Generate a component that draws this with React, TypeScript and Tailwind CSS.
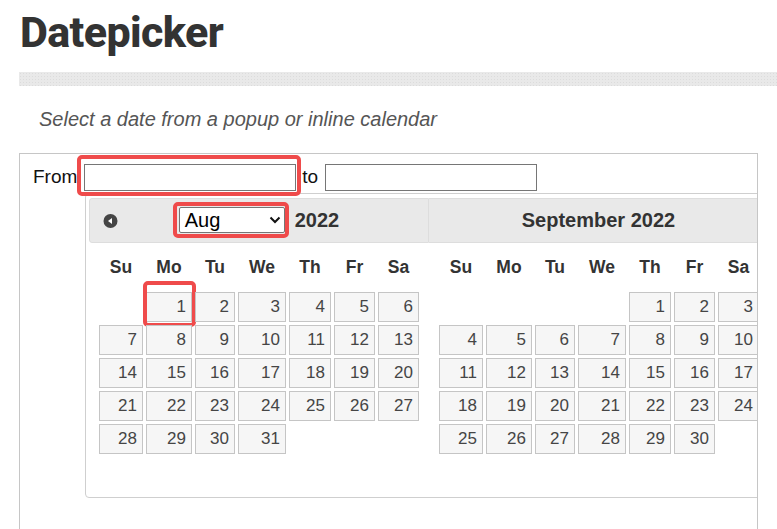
const colWidths = "grid-cols-[44px_46px_40px_48px_42px_41px_41px]"
const dayNames = ["Su", "Mo", "Tu", "We", "Th", "Fr", "Sa"]

const months = [
  { name: "Aug", offset: 1, days: 31 },
  { name: "September", offset: 4, days: 30 },
]

const PrevIcon = () => (
  <svg width="15" height="14" viewBox="0 0 15 14">
    <circle cx="7.5" cy="7" r="7" fill="#454545" />
    <polygon points="5,7 9,4 9,10" fill="#fff" />
  </svg>
)

const Chevron = () => (
  <svg width="12" height="8" viewBox="0 0 12 8">
    <path d="M1.5 1.5 L6 6 L10.5 1.5" fill="none" stroke="#111" strokeWidth="2" />
  </svg>
)

const Month = ({ month, first }: { month: (typeof months)[number]; first: boolean }) => {
  const cells: (number | null)[] = []
  for (let i = 0; i < month.offset; i++) cells.push(null)
  for (let d = 1; d <= month.days; d++) cells.push(d)

  return (
    <div className="w-[340px] shrink-0">
      <div
        className={
          "relative flex h-[45px] items-center justify-center border border-[#dddddd] bg-[#e9e9e9] text-[20px] font-bold text-[#333] " +
          (first ? "rounded-l-[3px]" : "border-l-0 rounded-r-[3px]")
        }
      >
        {first ? (
          <>
            <span className="absolute left-[13px] top-[15px] flex">
              <PrevIcon />
            </span>
            <span className="relative">
              <div className="flex h-[26px] w-[106px] items-center justify-between rounded-[2px] border border-[#767676] bg-white pl-[5px] pr-[3px] text-[20px] font-normal text-black">
                <span>Aug</span>
                <Chevron />
              </div>
              <span className="absolute left-[-6px] top-[-5px] h-[36px] w-[116px] rounded-[5px] border-4 border-[#ef4b4b]" />
            </span>
            <span className="ml-[10px]">2022</span>
          </>
        ) : (
          <span>September 2022</span>
        )}
      </div>
      <div className="pl-[10px]">
        <div className={`grid h-[49px] items-center gap-x-[3px] ${colWidths}`}>
          {dayNames.map((d) => (
            <div key={d} className="text-center text-[17.5px] font-bold text-[#333]">
              {d}
            </div>
          ))}
        </div>
        <div className={`grid gap-[3px] ${colWidths}`}>
          {cells.map((d, i) =>
            d === null ? (
              <div key={"e" + i} />
            ) : (
              <div key={d} className="relative">
                <div className="flex h-[30px] items-center justify-end border border-[#c5c5c5] bg-[#f6f6f6] pr-[5px] text-[17px] text-[#454545]">
                  {d}
                </div>
                {first && d === 1 && (
                  <span className="absolute left-[-3px] top-[-11px] h-[46px] w-[53px] rounded-[5px] border-4 border-[#ef4b4b]" />
                )}
              </div>
            )
          )}
        </div>
      </div>
    </div>
  )
}

export default function App() {
  return (
    <div className="h-[529px] w-[777px] overflow-hidden bg-white pt-[11px] font-['Liberation_Sans',Arial,sans-serif]">
      <h1 className="ml-[20px] font-['Roboto',sans-serif] text-[43px] font-extrabold leading-none tracking-[-0.6px] text-[#333]">
        Datepicker
      </h1>
      <div className="ml-[19px] mt-[18px] h-[14px] bg-[#e9e9e9] bg-[image:radial-gradient(#dcdcdc_0.8px,transparent_0.9px)] bg-[length:3px_3px]" />
      <p className="ml-[39px] mt-[23px] text-[20px] italic leading-[20px] text-[#555]">
        Select a date from a popup or inline calendar
      </p>
      <div className="ml-[19px] mt-[24px] h-[420px] w-[739px] overflow-hidden border border-[#c6c6c6] pl-[13px] pt-[9px]">
        <div className="flex items-center text-[19px] text-[#111]">
          <span>From</span>
          <span className="relative ml-[7px]">
            <input className="block h-[27px] w-[212px] border border-[#767676] bg-white outline-none" />
            <span className="absolute left-[-7px] top-[-9px] h-[41px] w-[224px] rounded-[5px] border-4 border-[#ef4b4b]" />
          </span>
          <span className="ml-[6px]">to</span>
          <input className="ml-[7px] block h-[27px] w-[212px] border border-[#767676] bg-white outline-none" />
        </div>
        <div className="ml-[52px] mt-[1px] flex h-[305px] w-[688px] rounded-[4px] border border-[#cfcfcf] pl-[3px] pt-[4px]">
          {months.map((m, i) => (
            <Month key={m.name} month={m} first={i === 0} />
          ))}
        </div>
      </div>
    </div>
  )
}
